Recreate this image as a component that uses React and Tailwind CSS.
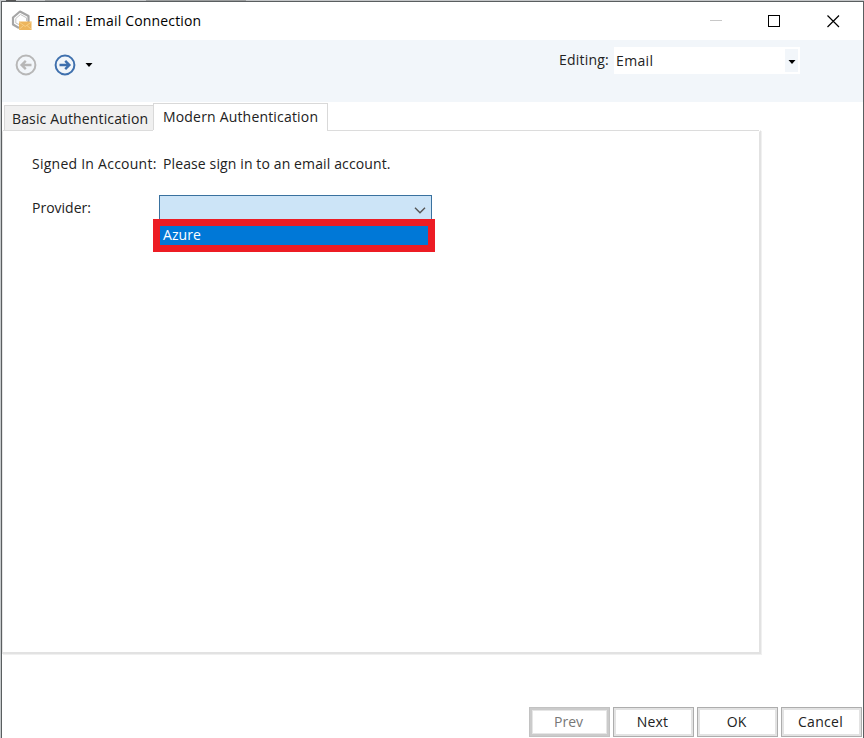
import React from "react";

const FONT = "font-['Open_Sans','Noto_Sans',sans-serif]";

function EnvelopeIcon() {
  return (
    <svg width="22" height="22" viewBox="0 0 22 22" fill="none">
      <path d="M8 18 L2 14.5 V7.5 L9 1.5 L17.5 6 V12" stroke="#a6a6a6" strokeWidth="2.2" strokeLinejoin="round" />
      <path d="M4.8 8.5 L9.5 4.5 L15.5 7.8 V11 M4.8 8.5 V13 L8 14.5" stroke="#c4c4c4" strokeWidth="1" />
      <rect x="8" y="11.5" width="12.5" height="8.5" fill="#edb55c" />
      <path d="M8 12 L14.2 16.5 L20.5 12 M8 19.5 L12.5 15.5 M20.5 19.5 L16 15.5" stroke="#f7d089" strokeWidth="0.9" />
    </svg>
  );
}

function ArrowCircle({ color, flip }) {
  return (
    <svg width="22" height="22" viewBox="0 0 22 22" fill="none" stroke={color}>
      <circle cx="11" cy="11" r="9.4" strokeWidth="2" />
      <path
        d={flip ? "M16.5 11 H7 M10.8 6.8 L6.6 11 L10.8 15.2" : "M5.5 11 H15 M11.2 6.8 L15.4 11 L11.2 15.2"}
        strokeWidth="2.4"
      />
    </svg>
  );
}

function Caret() {
  return (
    <svg width="8" height="4" viewBox="0 0 8 4" className="block">
      <path d="M0.5 0 H7.5 L4 4 Z" fill="#000" />
    </svg>
  );
}

function DialogButton({ label, muted, tracking }) {
  return (
    <button
      className={
        "flex h-[30px] w-[81px] items-center justify-center border bg-white pb-px pr-[2px] text-[14px] leading-none " +
        (muted
          ? "border-[#c2c2c2] text-[#777] shadow-[inset_0_0_0_2px_#cbcbcb,inset_0_0_0_3px_#e6e6e6]"
          : "border-[#adadad] text-[#222] shadow-[inset_0_0_0_2px_#e3e3e3]")
      }
    >
      <span className={tracking}>{label}</span>
    </button>
  );
}

export default function App() {
  return (
    <div className={"flex h-[738px] w-[864px] flex-col overflow-hidden bg-[#c5c9cb] text-[#222] " + FONT}>
      <div className="flex h-px shrink-0 bg-[#c4c6c8]">
        <span className="ml-[6px] h-px w-[10px] bg-[#555]" />
        <span className="ml-[29px] h-px w-[65px] bg-[#9b9d9e]" />
        <span className="ml-[36px] h-px w-[100px] bg-[#9b9d9e]" />
      </div>
      <div className="ml-px flex h-[737px] w-[863px] flex-col border-x border-t border-[#5a5e60] bg-white">
        <header className="flex h-[38px] shrink-0 items-center pl-[9px]">
          <EnvelopeIcon />
          <h1 className="ml-[4px] w-[640px] whitespace-nowrap text-[14px] font-normal leading-5 tracking-[0.17px] text-black">
            Email : Email Connection
          </h1>
          <div className="ml-[33px] flex items-center">
            <svg width="13" height="13" viewBox="0 0 13 13"><path d="M0 5.5H12" stroke="#c8c8c8" /></svg>
            <svg className="ml-[45px]" width="13" height="13" viewBox="0 0 13 13"><rect x=".5" y=".5" width="11" height="11" fill="none" stroke="#000" /></svg>
            <svg className="ml-[46px]" width="13" height="13" viewBox="0 0 13 13"><path d="M.5 .5L12 12M12 .5L.5 12" stroke="#000" strokeWidth="1.2" /></svg>
          </div>
        </header>

        <div className="flex h-[62px] shrink-0 bg-[#f2f6fa]">
          <div className="mt-[14px] flex h-[22px] w-[557px] items-center pl-[13px]">
            <ArrowCircle color="#b7b7b7" flip />
            <span className="w-[17px]" />
            <ArrowCircle color="#3f70ad" />
            <span className="w-[9px]" />
            <Caret />
          </div>
          <span className="mt-[10px] w-[55px] whitespace-nowrap text-[14px] leading-5 tracking-[0.2px]">Editing:</span>
          <div className="mt-[7px] flex h-[27px] w-[186px] items-center justify-between bg-white pl-[2px] pr-[2px]">
            <span className="text-[14px] leading-5 tracking-[0.35px]">Email</span>
            <span className="flex h-[23px] w-[13px] items-center justify-center bg-[#f2f6fa] pt-[2px]"><Caret /></span>
          </div>
        </div>

        <main className="flex h-[605px] shrink-0 flex-col">
          <div className="flex h-[29px] items-end pl-[2px]">
            <div className="flex h-[26px] w-[149px] items-center border border-r-0 border-[#d9d9d9] bg-[#f0f0f0] pl-[7px] pt-px text-[14px] leading-5">
              <span className="whitespace-nowrap tracking-[0.14px]">Basic Authentication</span>
            </div>
            <div className="-mb-px h-[29px] w-[175px] border border-b-0 border-[#d9d9d9] bg-white pl-[9px] pt-[3px] text-[14px] leading-5">
              <span className="whitespace-nowrap tracking-[0.18px]">Modern Authentication</span>
            </div>
          </div>
          <section className="-mt-px h-[524px] w-[759px] border-y-2 border-l border-r-2 border-b-[#e2e2e2] border-l-[#e5e5e5] border-r-[#e2e2e2] border-t-transparent bg-white shadow-[1px_1px_0_0_#f0f0f0]">
            <div className="-mt-[2px] flex h-px">
              <span className="w-[150px] bg-[#dcdcdc]" />
              <span className="w-[174px]" />
              <span className="flex-1 bg-[#dcdcdc]" />
            </div>
            <div className="mt-[23px] flex pl-[29px] text-[14px] leading-5">
              <span className="w-[131px] whitespace-nowrap tracking-[0.25px]">Signed In Account:</span>
              <span className="whitespace-nowrap tracking-[0.12px]">Please sign in to an email account.</span>
            </div>
            <div className="mt-[21px] flex pl-[29px] text-[14px] leading-5">
              <span className="mt-[3px] w-[121px]">Provider:</span>
              <div className="w-[282px]">
                <div className="ml-[6px] flex h-[24px] w-[273px] items-center justify-end border border-b-0 border-[#39719f] bg-[#cce4f7] pr-[5px] pt-[5px]">
                  <svg width="12" height="7" viewBox="0 0 12 7"><path d="M1 .8L6 5.8L11 .8" fill="none" stroke="#555" strokeWidth="1.4" /></svg>
                </div>
                <div className="flex h-[33px] items-center border-x-[7px] border-y-[7px] border-[#ed1c24] bg-[#0078d7] pb-[2px] pl-[3px] text-white">
                  <span className="leading-none tracking-[0.1px]">Azure</span>
                </div>
              </div>
            </div>
          </section>
        </main>

        <footer className="flex h-[31px] shrink-0 justify-end gap-[3px] pr-px">
          <DialogButton label="Prev" muted tracking="" />
          <DialogButton label="Next" tracking="tracking-[0.2px]" />
          <DialogButton label="OK" tracking="" />
          <DialogButton label="Cancel" tracking="tracking-[0.3px]" />
        </footer>
      </div>
    </div>
  );
}
